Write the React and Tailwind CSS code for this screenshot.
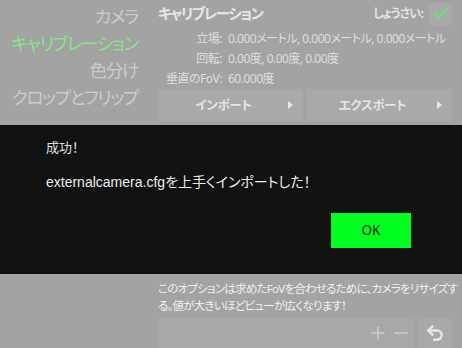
import { Check, Plus, Minus, Undo2 } from 'lucide-react'

const FONT = "font-['Noto_Sans','Noto_Sans_CJK_JP',sans-serif] [font-feature-settings:'palt']"

function NavItem({ label, active }) {
  return (
    <div className={`h-[27px] leading-[27px] text-[17.5px] tracking-[-1.2px] whitespace-nowrap text-right ${active ? 'text-[#86e486]' : 'text-[#cbcbcb]'}`}>
      {label}
    </div>
  )
}

function InfoRow({ label, value }) {
  return (
    <div className="flex h-[20px] items-center text-[12px] tracking-[-0.5px] whitespace-nowrap text-[#dedede]">
      <span className="w-[64px] text-right">{label}</span>
      <span className="ml-[6px]">{value}</span>
    </div>
  )
}

function ArrowButton({ label }) {
  return (
    <button className="relative flex-1 h-[33px] bg-[#a9a9a9] text-[12.5px] font-bold tracking-[-0.3px] text-[#e4e4e4]">
      <span className="pr-[14px]">{label}</span>
      <span className="absolute right-[10px] top-[12px] w-0 h-0 border-y-[4px] border-y-transparent border-l-[5px] border-l-[#e8e8e8]" />
    </button>
  )
}

export default function App() {
  return (
    <div className={`relative w-[462px] h-[348px] overflow-hidden bg-[#a3a3a3] ${FONT}`}>
      <div className="flex h-full">
        {/* menu */}
        <div className="w-[150px] shrink-0 pt-[3px] pr-[12px]">
          <NavItem label="カメラ" />
          <NavItem label="キャリブレーション" active />
          <NavItem label="色分け" />
          <NavItem label="クロップとフリップ" />
        </div>

        {/* panel */}
        <div className="flex-1 min-w-0 flex flex-col pl-[8px] pr-[10px]">
          <div className="flex items-center h-[28px] pt-[1px]">
            <span className="text-[14.5px] font-bold tracking-[-1.4px] text-[#e6e6e6]">キャリブレーション</span>
            <span className="ml-auto text-[12px] font-bold tracking-[-0.8px] text-[#e2e2e2] mr-[6px]">しょうさい:</span>
            <div className="w-[23px] h-[22px] bg-[#a9a9a9] flex items-center justify-center">
              <Check size={17} strokeWidth={3.5} color="#72dc72" />
            </div>
          </div>
          <div className="pt-[3px]">
            <InfoRow label="立場:" value="0.000メートル, 0.000メートル, 0.000メートル" />
            <InfoRow label="回転:" value="0.00度, 0.00度, 0.00度" />
            <InfoRow label="垂直のFoV:" value="60.000度" />
          </div>
          <div className="flex gap-[4px] mt-[0px]">
            <ArrowButton label="インポート" />
            <ArrowButton label="エクスポート" />
          </div>

          <div className="h-[167px]" />

          <p className="text-[11.5px] leading-[17px] tracking-[-0.75px] whitespace-nowrap text-[#f0f0f0]">
            このオプションは求めたFoVを合わせるために、カメラをリサイズす<br />
            る。値が大きいほどビューが広くなります！
          </p>
          <div className="flex gap-[5px] mt-[4px]">
            <div className="flex-1 h-[30px] bg-[#a8a8a8] flex items-center justify-end gap-[3px] pr-[2px]">
              <Plus size={20} strokeWidth={2.5} color="#c4c4c4" />
              <Minus size={20} strokeWidth={2.5} color="#c4c4c4" />
            </div>
            <div className="w-[34px] h-[30px] bg-[#a8a8a8] flex items-center justify-center">
              <Undo2 size={20} strokeWidth={3} color="#e6e6e6" />
            </div>
          </div>
        </div>
      </div>

      {/* dialog */}
      <div className="absolute left-0 right-0 top-[125px] h-[149px] bg-[#111111] px-[46px] pt-[13px]">
        <div className="text-[13px] text-[#e0e0e0]">成功！</div>
        <div className="mt-[14px] text-[14px] text-[#ececec] font-['Liberation_Sans','Noto_Sans_CJK_JP',sans-serif]">externalcamera.cfgを上手くインポートした！</div>
        <div className="flex justify-end mt-[20px] pr-[5px]">
          <button className="w-[80px] h-[35px] bg-[#00ff1e] text-[13.5px] text-[#1a1a1a]">OK</button>
        </div>
      </div>
    </div>
  )
}
